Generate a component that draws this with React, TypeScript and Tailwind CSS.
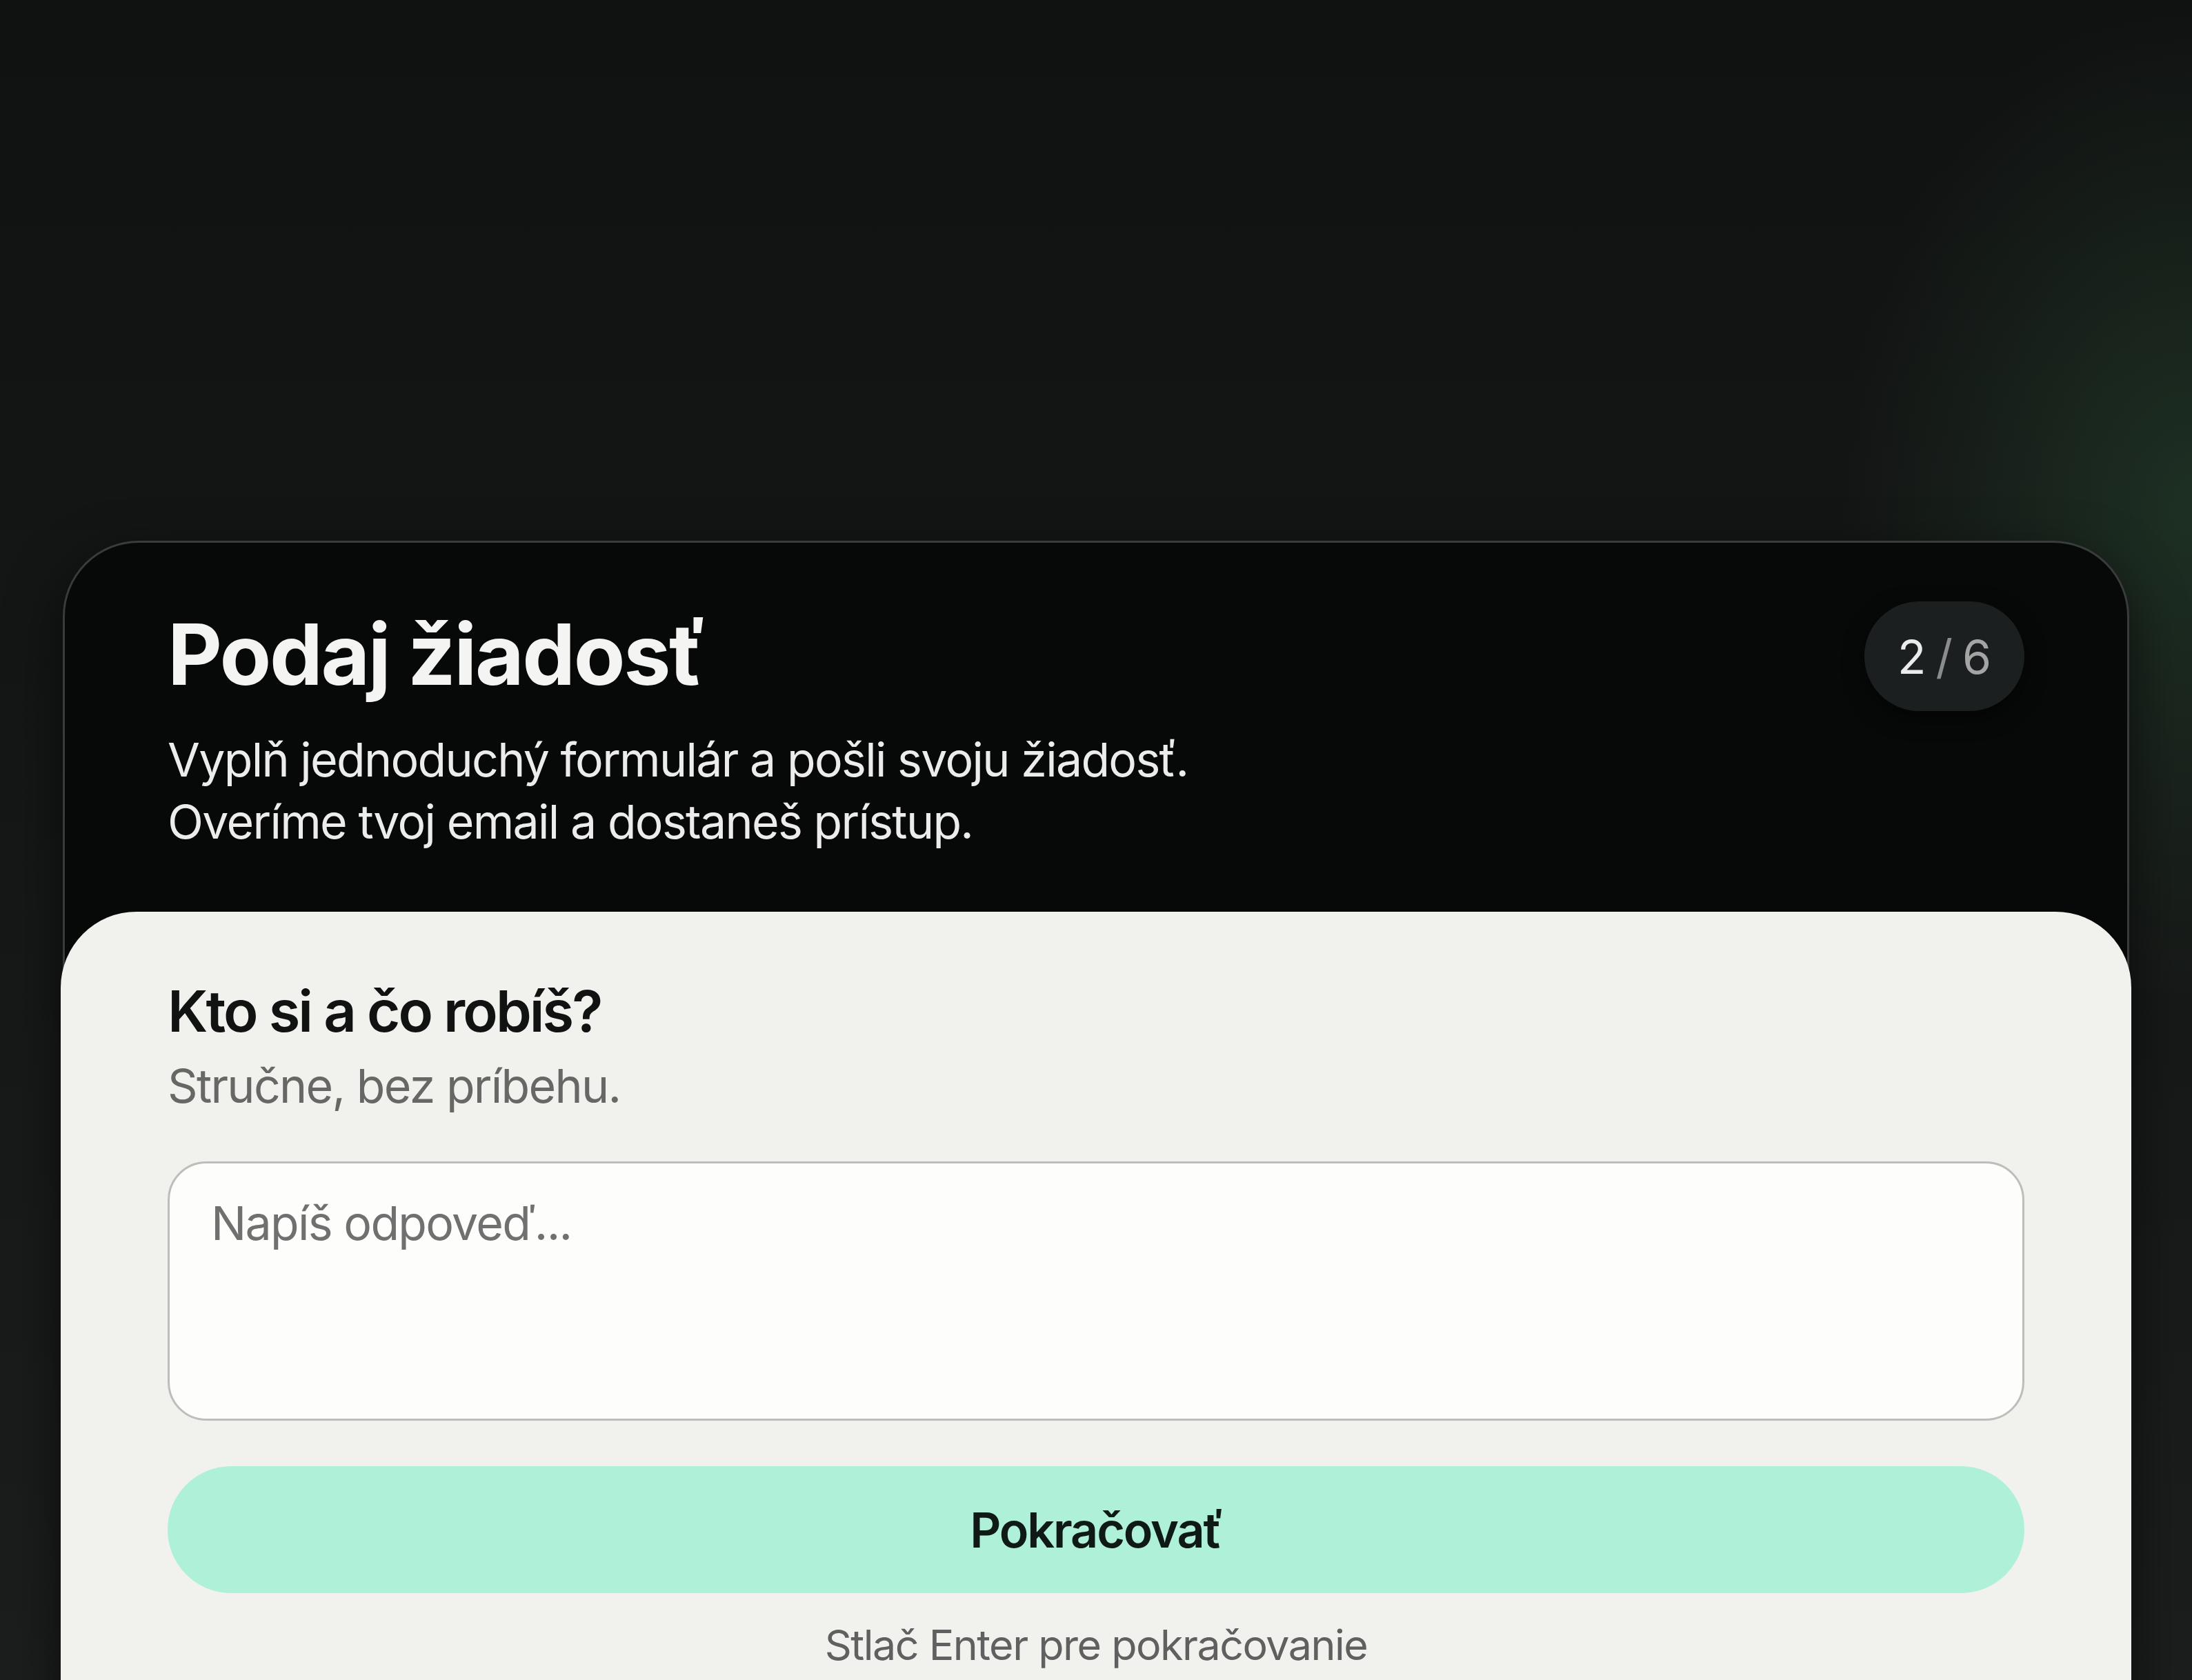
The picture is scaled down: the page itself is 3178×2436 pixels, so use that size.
const App = () => {
  return (
    <div className="h-screen w-full overflow-hidden bg-[linear-gradient(180deg,#101111_0%,#151716_45%,#1b1e1d_100%)] font-['Inter',sans-serif]">
      <div className="h-full w-full bg-[radial-gradient(ellipse_16%_30%_at_100%_30%,rgba(48,96,62,0.35),transparent)] px-[91px] pt-[784px]">
        <div className="rounded-[110px] border-[3px] border-[#393c3b] bg-[#070808] shadow-[0_30px_80px_rgba(0,0,0,0.6)]">
          <div className="flex items-start justify-between px-[149px] pt-[85px] pb-[86px]">
            <div>
              <h1 className="mt-[10px] text-[122px] font-bold leading-[1.1] tracking-[-0.02em] text-[#f4f4f2]">
                Podaj žiadosť
              </h1>
              <p className="mt-[40px] text-[68px] leading-[90px] tracking-[-0.025em] text-[#ececea]">
                Vyplň jednoduchý formulár a pošli svoju žiadosť.
                <br />
                Overíme tvoj email a dostaneš prístup.
              </p>
            </div>
            <div className="flex h-[159px] w-[232px] items-center justify-center rounded-full bg-[#1c1f20] text-[68px] shadow-[0_10px_30px_rgba(0,0,0,0.5)]">
              <span className="text-[#ebebeb]">2</span>
              <span className="mx-[14px] text-[#8a8d8c]">/</span>
              <span className="text-[#a3a5a4]">6</span>
            </div>
          </div>

          <div className="-mx-[6px] rounded-t-[110px] bg-[#f1f1ed] px-[155px] pt-[95px] pb-[120px]">
            <h2 className="text-[83px] font-semibold leading-[1.2] tracking-[-0.035em] text-[#111313]">
              Kto si a čo robíš?
            </h2>
            <p className="mt-[13px] text-[68px] leading-[1.3] tracking-[-0.025em] text-[#666866]">
              Stručne, bez príbehu.
            </p>
            <textarea
              placeholder="Napíš odpoveď..."
              className="mt-[66px] block h-[376px] w-full resize-none rounded-[56px] border-[3px] border-[#bdbdba] bg-[#fdfdfc] px-[60px] pt-[39px] text-[68px] leading-[1.4] tracking-[-0.025em] text-[#222] outline-none placeholder:text-[#707070]"
            />
            <button className="mt-[66px] flex h-[184px] w-full items-center justify-center rounded-full bg-[#aef0d8] text-[70px] font-semibold tracking-[-0.03em] text-[#0f1a17]">
              Pokračovať
            </button>
            <p className="mt-[36px] text-center text-[61px] leading-[1.3] tracking-[-0.025em] text-[#5f605f]">
              Stlač Enter pre pokračovanie
            </p>
          </div>
        </div>
      </div>
    </div>
  );
};

export default App;
